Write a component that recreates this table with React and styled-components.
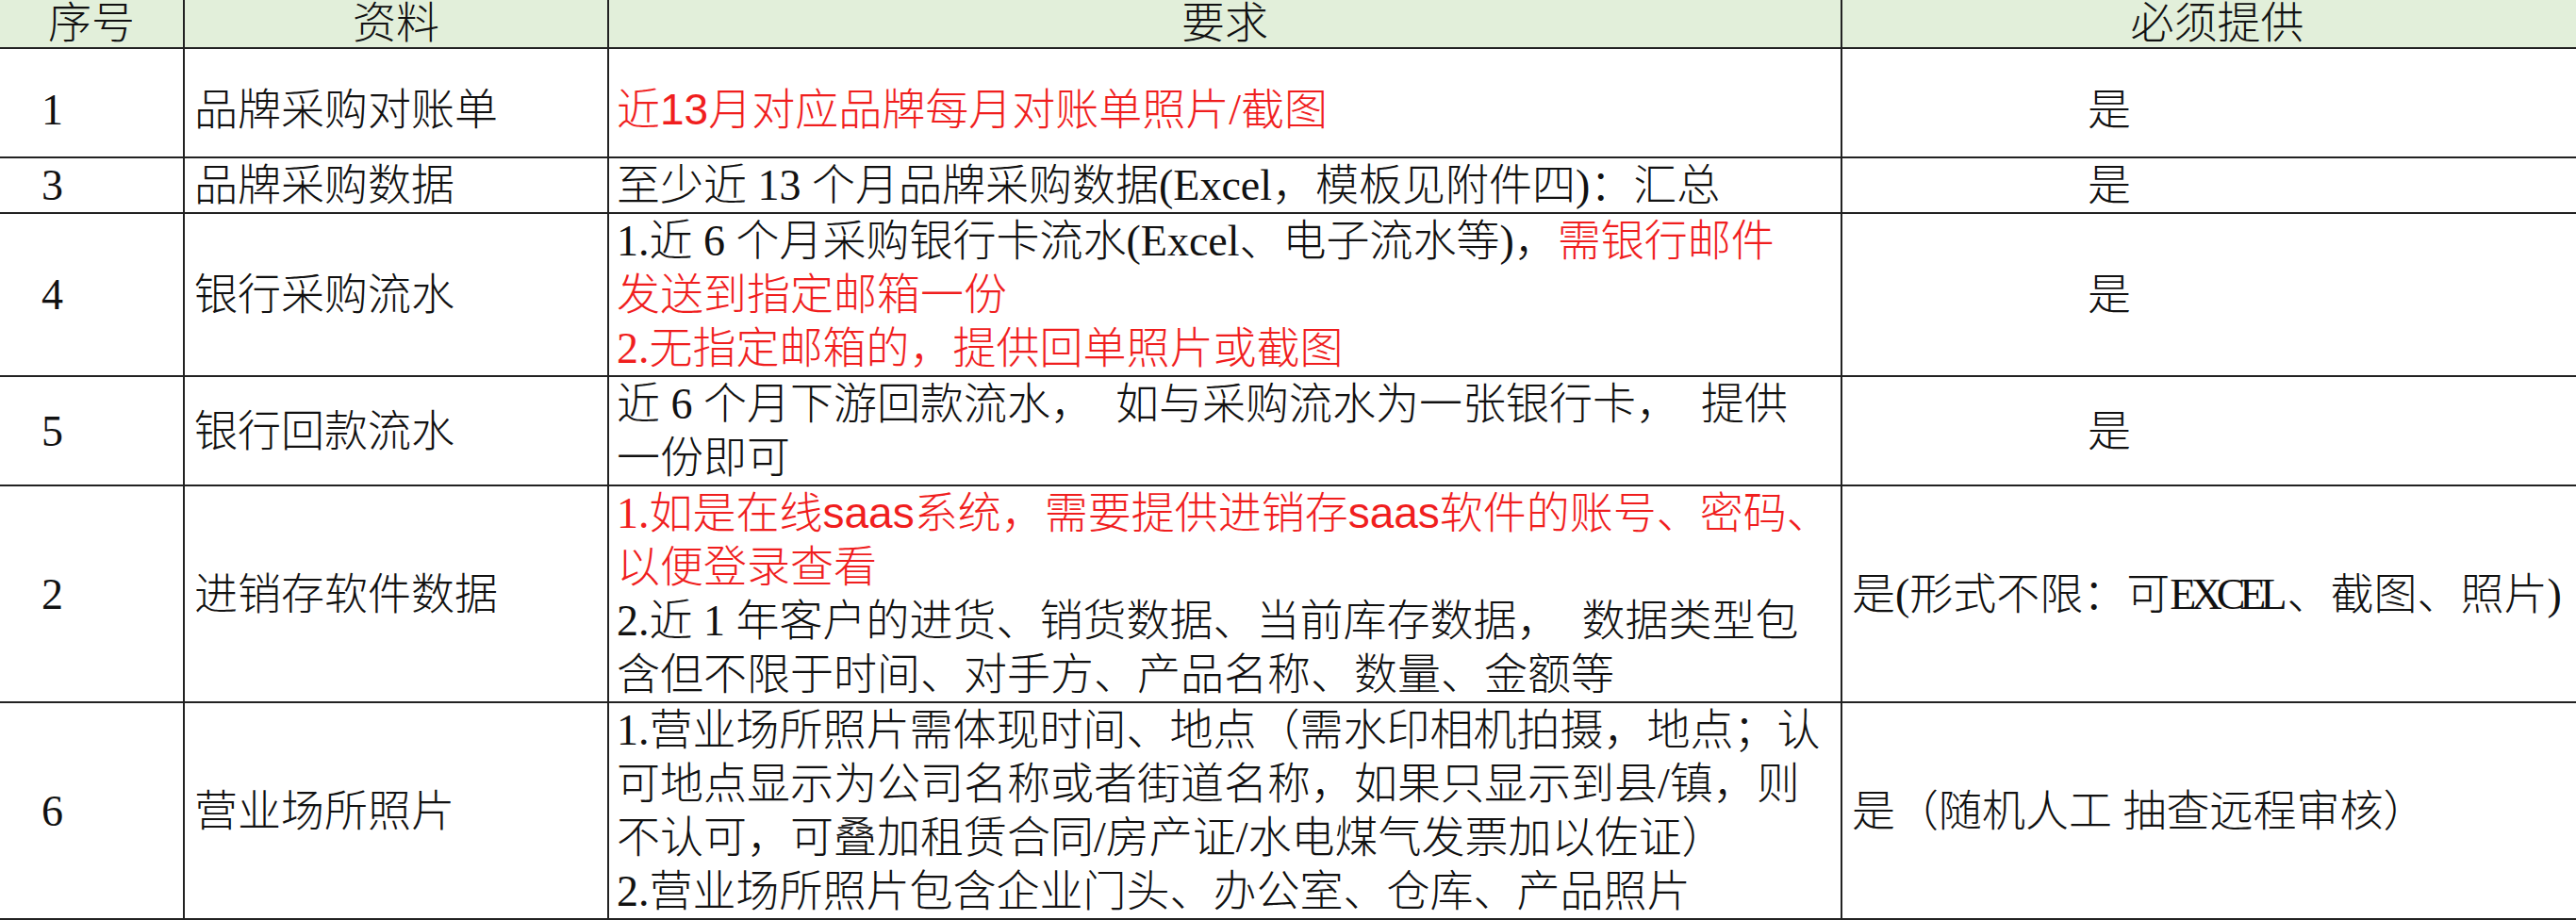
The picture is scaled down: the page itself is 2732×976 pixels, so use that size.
import React from 'react'
import styled, { createGlobalStyle } from 'styled-components'

const GlobalStyle = createGlobalStyle`
  html, body {
    margin: 0;
    padding: 0;
    background: #fff;
    overflow: hidden;
  }
`

const Sheet = styled.table`
  border-collapse: collapse;
  table-layout: fixed;
  width: 2750px;
  font-family: "Liberation Serif", "Noto Sans CJK SC", serif;
  font-size: 46px;
  font-weight: 300;
  color: #111;
`

const Col = styled.col`
  width: ${p => p.$w}px;
`

const HeadCell = styled.th`
  background: #e2efda;
  font-weight: 300;
  height: 50px;
  line-height: 50px;
  padding: 0;
  text-align: center;
  border: 2px solid #222;
  border-top: none;
  &:first-child {
    border-left: none;
  }
`

const Row = styled.tr`
  height: ${p => (p.$h ? `${p.$h}px` : 'auto')};
`

const Cell = styled.td`
  border: 2px solid #222;
  padding: ${p => p.$top ?? 0}px 8px 0 ${p => p.$indent ?? 8}px;
  vertical-align: middle;
  line-height: 57px;
  white-space: pre;
  text-align: left;
  overflow: hidden;
  &:first-child {
    border-left: none;
  }
`

const Line = styled.div`
  display: block;
`

const Seg = styled.span`
  color: ${p => (p.$red ? '#f01e1e' : 'inherit')};
  font-family: ${p => (p.$sans ? '"Liberation Sans", "Noto Sans CJK SC", sans-serif' : 'inherit')};
`

// Latin capitals in the sheet are half-width, ours are wider: pull them in
const Narrow = styled.span`
  letter-spacing: -6px;
  margin-right: 6px;
`

// each requirement is a list of lines, each line a list of [text, red, sans]
const rows = [
  {
    no: '1',
    name: '品牌采购对账单',
    h: 116,
    top: 14,
    req: [[['近', true], ['13', true, true], ['月对应品牌每月对账单照片/截图', true]]],
    must: '是',
    mustIndent: 260,
  },
  {
    no: '3',
    name: '品牌采购数据',
    req: [[['至少近 13 个月品牌采购数据(Excel，模板见附件四)：汇总']]],
    must: '是',
    mustIndent: 260,
  },
  {
    no: '4',
    name: '银行采购流水',
    req: [
      [['1.近 6 个月采购银行卡流水(Excel、电子流水等)，'], ['需银行邮件', true]],
      [['发送到指定邮箱一份', true]],
      [['2.无指定邮箱的，提供回单照片或截图', true]],
    ],
    must: '是',
    mustIndent: 260,
  },
  {
    no: '5',
    name: '银行回款流水',
    req: [
      [['近 6 个月下游回款流水，  如与采购流水为一张银行卡，  提供']],
      [['一份即可']],
    ],
    must: '是',
    mustIndent: 260,
  },
  {
    no: '2',
    name: '进销存软件数据',
    req: [
      [['1.如是在线', true], ['saas', true, true], ['系统，需要提供进销存', true], ['saas', true, true], ['软件的账号、密码、', true]],
      [['以便登录查看', true]],
      [['2.近 1 年客户的进货、销货数据、当前库存数据，  数据类型包']],
      [['含但不限于时间、对手方、产品名称、数量、金额等']],
    ],
    must: <>是(形式不限：可<Narrow>EXCEL</Narrow>、截图、照片)</>,
    mustIndent: 10,
  },
  {
    no: '6',
    name: '营业场所照片',
    req: [
      [['1.营业场所照片需体现时间、地点（需水印相机拍摄，地点；认']],
      [['可地点显示为公司名称或者街道名称，如果只显示到县/镇，则']],
      [['不认可，可叠加租赁合同/房产证/水电煤气发票加以佐证）']],
      [['2.营业场所照片包含企业门头、办公室、仓库、产品照片']],
    ],
    must: '是（随机人工 抽查远程审核）',
    mustIndent: 10,
  },
]

export default function App() {
  return (
    <>
      <GlobalStyle />
      <Sheet>
        <colgroup>
          <Col $w={195} />
          <Col $w={450} />
          <Col $w={1308} />
          <Col $w={797} />
        </colgroup>
        <thead>
          <tr>
            <HeadCell>序号</HeadCell>
            <HeadCell>资料</HeadCell>
            <HeadCell>要求</HeadCell>
            <HeadCell>必须提供</HeadCell>
          </tr>
        </thead>
        <tbody>
          {rows.map(r => (
            <Row key={r.no} $h={r.h}>
              <Cell $indent={44} $top={r.top}>{r.no}</Cell>
              <Cell $indent={10} $top={r.top}>{r.name}</Cell>
              <Cell $indent={8} $top={r.top}>
                {r.req.map((line, i) => (
                  <Line key={i}>
                    {line.map(([t, red, sans], j) => (
                      <Seg key={j} $red={red} $sans={sans}>{t}</Seg>
                    ))}
                  </Line>
                ))}
              </Cell>
              <Cell $indent={r.mustIndent} $top={r.top}>{r.must}</Cell>
            </Row>
          ))}
        </tbody>
      </Sheet>
    </>
  )
}
